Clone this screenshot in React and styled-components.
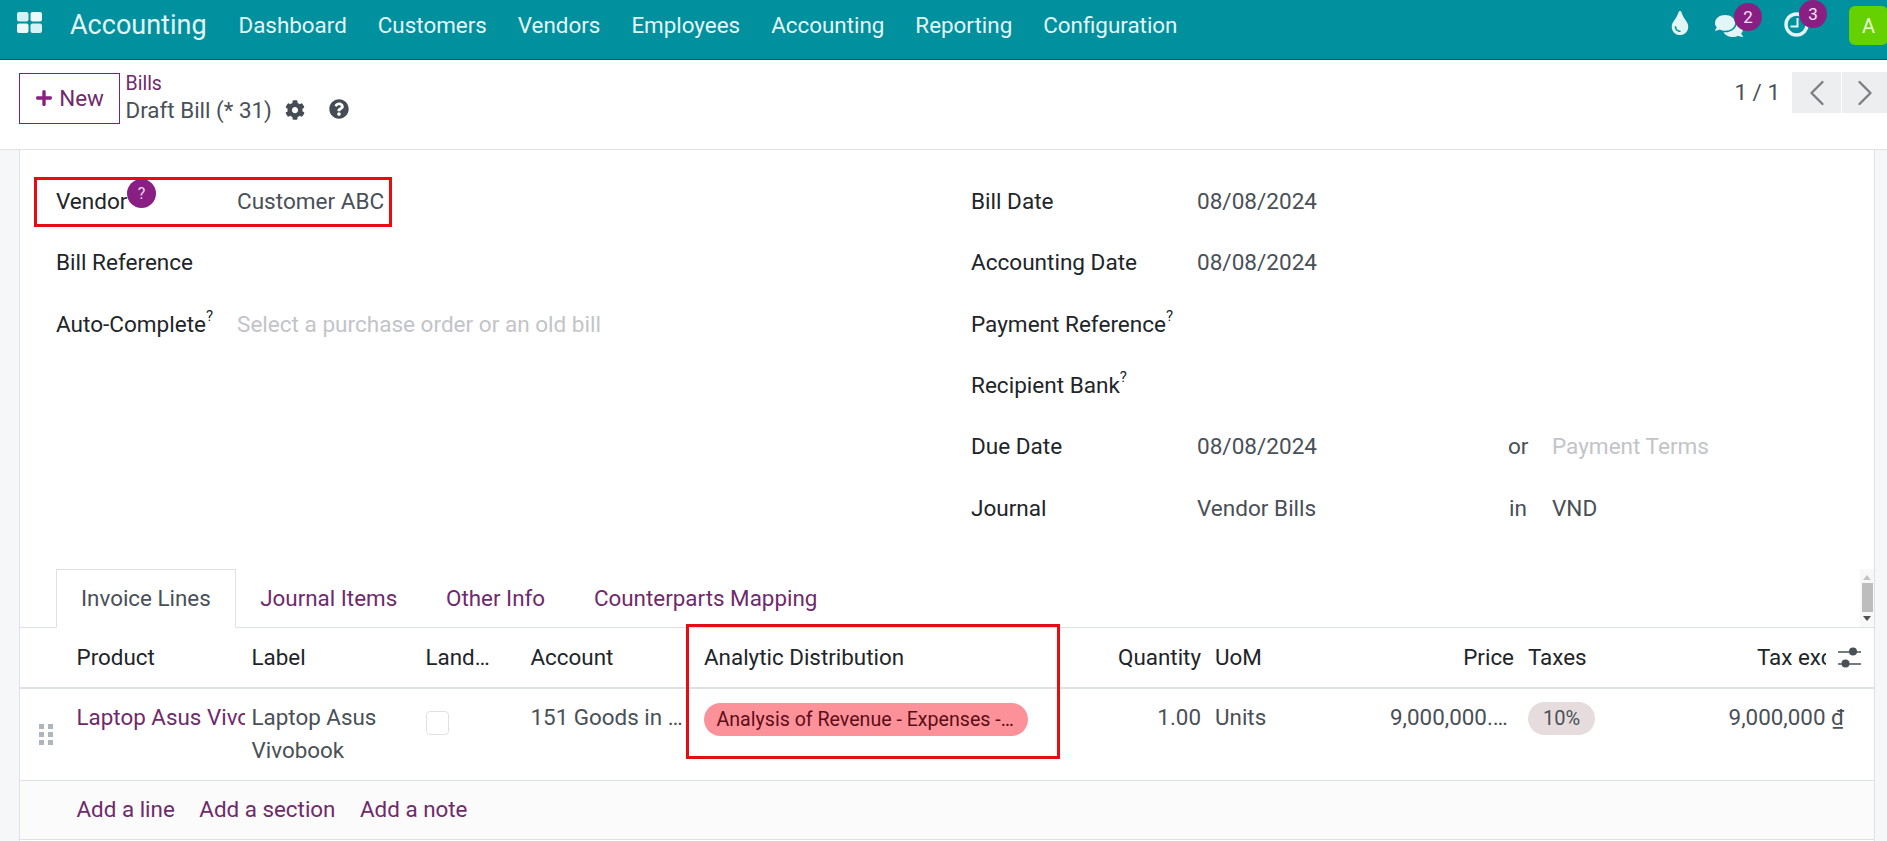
import React from "react";
import styled, { createGlobalStyle } from "styled-components";
import { FaTint, FaComments, FaCog, FaQuestionCircle, FaPlus } from "react-icons/fa";
import { ChevronLeft, ChevronRight } from "lucide-react";

const Global = createGlobalStyle`
  html, body { margin: 0; padding: 0; height: 100%; }
  body { font-family: Roboto, "Liberation Sans", sans-serif; font-size: 22.4px; color: #212529; background: #fff; overflow: hidden; }
  * { box-sizing: border-box; }
`;

const Page = styled.div`
  display: flex; flex-direction: column; height: 841px; overflow: hidden;
`;
const TopBar = styled.header`
  display: flex; align-items: center; height: 60px; flex: none; background: #00909e;
  border-bottom: 1px solid #0a6169; color: #e2f6f7; position: relative;
`;
const AppsButton = styled.div`
  width: 70px; padding-left: 17px; display: flex; align-items: center; margin-top: -13px;
`;
const Brand = styled.div`
  font-size: 27px; width: 153px; margin-top: -10px; flex: none;
`;
const NavItem = styled.div`
  padding: 0 15.5px; margin-top: -9px; font-size: 22.4px; flex: none; white-space: nowrap;
`;
const Systray = styled.div`
  margin-left: auto; position: relative; width: 207px; height: 59px; flex: none;
`;
const TrayIcon = styled.div`
  position: absolute; left: ${p => p.$x}px; top: ${p => p.$y}px; display: flex; color: #e2f6f7;
`;
const Counter = styled.span`
  position: absolute; left: ${p => p.$x}px; top: ${p => p.$y}px; width: 28px; height: 28px; border-radius: 50%;
  background: #8a1f83; color: #f3e4f2; font-size: 17px; display: flex; align-items: center; justify-content: center;
`;
const Avatar = styled.div`
  position: absolute; left: 169px; top: 6px; width: 39px; height: 39px; border-radius: 6px;
  background: #66d100; color: #e9fbd7; font-size: 20px; display: flex; align-items: center; justify-content: center;
`;

const Toolbar = styled.div`
  display: flex; height: 90px; flex: none; background: #fff; border-bottom: 1px solid #dee2e6; position: relative;
`;
const NewButton = styled.div`
  margin: 13px 0 0 19px; width: 101px; height: 51px; padding-bottom: 2px; border: 1px solid #71296b; color: #6f2a6c;
  display: flex; align-items: center; justify-content: center; gap: 6px; font-size: 22.4px; flex: none;
`;
const Crumbs = styled.div`
  margin: 11px 0 0 5.5px; display: flex; flex-direction: column;
`;
const CrumbLink = styled.div`
  color: #6f2a6c; font-size: 19.5px; line-height: 26px;
`;
const CrumbRow = styled.div`
  display: flex; align-items: center; height: 30px; margin-top: -2px; font-size: 22.4px; color: #495057;
`;
const CrumbIcon = styled.span`
  display: flex; color: #454c54; margin-left: ${p => p.$gap}px; margin-top: ${p => p.$lift}px;
`;
const Pager = styled.div`
  margin-left: auto; display: flex; align-items: flex-start; padding-top: 12px;
`;
const PagerText = styled.div`
  color: #495057; font-size: 22.4px; line-height: 41px; margin-right: 12px;
`;
const PagerButton = styled.div`
  width: ${p => p.$w}px; height: 41px; background: #eceef0; color: #7c7f82; display: flex; align-items: center;
  justify-content: center; margin-left: ${p => p.$gap}px;
`;

const Body = styled.div`
  flex: 1; background: #f6f7f9; padding: 0 12px 0 19px; min-height: 0;
`;
const Sheet = styled.div`
  position: relative; background: #fff; border-left: 1px solid #dee2e6; border-right: 1px solid #dee2e6; height: 100%;
`;
const FormGrid = styled.div`
  display: grid; grid-template-columns: 915px 1fr; padding: 20.6px 0 0 36px; height: 419px; font-size: 22.55px;
`;
const FormCol = styled.div`
  display: grid; grid-auto-rows: 61.4px;
`;
const FieldRow = styled.div`
  display: grid; grid-template-columns: ${p => p.$label}px 1fr; align-items: center; white-space: nowrap;
`;
const FieldLabel = styled.div`
  color: #212529;
  sup { font-size: 15px; line-height: 0; position: relative; top: -2px; vertical-align: super; }
`;
const FieldValue = styled.div`
  color: #495057;
`;
const Placeholder = styled.div`
  color: #c2c4c8;
`;
const Compound = styled.div`
  display: grid; grid-template-columns: 311px 20px 1fr; align-items: center;
`;
const Connector = styled.div`
  text-align: center; color: #495057;
`;
const TrailValue = styled.div`
  padding-left: 24px; color: ${p => (p.$muted ? "#c2c4c8" : "#495057")};
`;
const HelpBubble = styled.span`
  position: absolute; left: 107px; top: 29px; width: 29px; height: 29px; border-radius: 50%;
  background: #8a1f83; color: #ecd8ea; font-size: 16px; display: flex; align-items: center; justify-content: center;
`;
const Annotation = styled.div`
  position: absolute; left: ${p => p.$x}px; top: ${p => p.$y}px; width: ${p => p.$w}px; height: ${p => p.$h}px;
  border: 3px solid #e70b14; pointer-events: none;
`;
const ColumnToggle = styled.div`
  position: absolute; left: 1817.5px; top: 497px; display: flex;
`;

const TabStrip = styled.div`
  position: relative; display: flex; height: 59px; padding-left: 36px; border-bottom: 1px solid #dee2e6;
`;
const Tab = styled.div`
  padding: 0 ${p => (p.$active ? 24 : 23.4)}px 2px; height: ${p => (p.$active ? "59px" : "58px")}; display: flex; align-items: center; font-size: 22.4px;
  color: ${p => (p.$active ? "#495057" : "#6f2a6c")}; background: #fff;
  border: 1px solid ${p => (p.$active ? "#dee2e6" : "transparent")}; border-bottom: ${p => (p.$active ? "1px solid #fff" : "0")};
`;
const ScrollBar = styled.div`
  position: absolute; right: 0; top: 0; width: 14px; height: 58px; background: #f8f8f8;
  display: flex; flex-direction: column; align-items: center;
`;
const ScrollThumb = styled.div`
  width: 11px; height: 29px; background: #bdbdbd; margin: 3px 0;
`;
const ArrowUp = styled.div`
  margin-top: 6px; width: 0; height: 0; border-left: 4px solid transparent; border-right: 4px solid transparent;
  border-bottom: 5px solid #c4c4c4;
`;
const ArrowDown = styled.div`
  margin-top: 1px; width: 0; height: 0; border-left: 4px solid transparent; border-right: 4px solid transparent;
  border-top: 5px solid #505050;
`;

const Lines = styled.table`
  table-layout: fixed; width: 100%; border-collapse: collapse; font-size: 22.4px;
`;
const Head = styled.th`
  height: 60px; font-weight: 400; color: #212529; padding: 0 ${p => p.$pr ?? 7}px 2px 7px; overflow: hidden; white-space: nowrap;
  text-overflow: ellipsis; text-align: ${p => p.$align || "left"}; border-bottom: 2px solid #dee2e6;
`;
const Cell = styled.td`
  vertical-align: top; padding: 12px ${p => p.$pr ?? 7}px 0 7px; line-height: 32.5px; height: 92px; color: #495057; overflow: hidden;
  white-space: ${p => (p.$wrap ? "normal" : "nowrap")}; text-align: ${p => p.$align || "left"};
  text-overflow: ${p => (p.$clip ? "clip" : "ellipsis")}; border-bottom: 1px solid #dee2e6;
`;
const HandleCell = styled.td`
  vertical-align: top; padding: 35px 0 0 19px; border-bottom: 1px solid #dee2e6;
`;
const ProductLink = styled.span`
  color: #6f2a6c;
`;
const TaxHeadText = styled.div`
  width: 69px; margin: 0 18px 0 auto; overflow: hidden; white-space: nowrap;
`;
const Check = styled.div`
  width: 23px; height: 24px; margin-top: 10px; border: 1px solid #dee2e6; border-radius: 4px; background: #fff;
`;
const Pill = styled.div`
  width: 324px; height: 33px; margin-top: 2px; line-height: 33px; border-radius: 17px; padding: 0 12.5px; font-size: 19.6px;
  background: #fd9199; color: #5c0d16; overflow: hidden; white-space: nowrap; text-overflow: ellipsis;
`;
const TaxBadge = styled.div`
  width: 67px; height: 33px; margin-top: 1px; line-height: 33px; border-radius: 17px; background: #e6dcde; color: #495057; font-size: 20px; text-align: center;
`;
const AddRow = styled.td`
  height: 59px; background: #fbfbfb; border-bottom: 1px solid #dee2e6; padding: 0 0 2px 56.5px;
`;
const AddLinks = styled.div`
  display: flex; gap: 24.5px; color: #6f2a6c; font-size: 22.4px;
`;

const nav = ["Dashboard", "Customers", "Vendors", "Employees", "Accounting", "Reporting", "Configuration"];
const widths = [49.5, 175, 174, 105, 173.5, 363, 148, 175, 138, 199, 131, 23];

const AppsIcon = () => (
  <svg width="26" height="22" viewBox="0 0 26 22">
    <rect x="0" y="0" width="11.5" height="9.5" rx="2" fill="#d5f3f4" />
    <rect x="13.5" y="0" width="11.5" height="9.5" rx="2" fill="#eefafa" />
    <rect x="0" y="11.5" width="11.5" height="9.5" rx="2" fill="#eefafa" />
    <rect x="13.5" y="11.5" width="11.5" height="9.5" rx="2" fill="#d5f3f4" />
  </svg>
);
const ClockIcon = () => (
  <svg width="25" height="25" viewBox="0 0 25 25">
    <circle cx="12.5" cy="12.5" r="10.5" fill="none" stroke="#e2f6f7" strokeWidth="3.4" />
    <path d="M13.5 6v8.5H6.5" fill="none" stroke="#e2f6f7" strokeWidth="2" />
  </svg>
);
const HandleIcon = () => (
  <svg width="14" height="21" viewBox="0 0 14 21" style={{ display: "block" }}>
    {[0, 8, 16].map(y => [0, 9].map(x => <rect key={`${x}-${y}`} x={x} y={y} width="5" height="5" fill="#adb5bd" />))}
  </svg>
);
const SlidersIcon = () => (
  <svg width="23" height="21" viewBox="0 0 23 21" style={{ display: "block" }}>
    <path d="M0 5h23M0 17h23" stroke="#495057" strokeWidth="1.6" />
    <circle cx="15" cy="4.5" r="4" fill="#495057" />
    <circle cx="7.5" cy="16.5" r="4" fill="#495057" />
  </svg>
);

export default function App() {
  return (
    <Page>
      <Global />
      <TopBar>
        <AppsButton><AppsIcon /></AppsButton>
        <Brand>Accounting</Brand>
        {nav.map(n => <NavItem key={n}>{n}</NavItem>)}
        <Systray>
          <TrayIcon $x={-12} $y={11}><FaTint size={24} /></TrayIcon>
          <TrayIcon $x={35} $y={12}><FaComments size={28} /></TrayIcon>
          <Counter $x={54} $y={3}>2</Counter>
          <TrayIcon $x={104} $y={12}><ClockIcon /></TrayIcon>
          <Counter $x={119} $y={0}>3</Counter>
          <Avatar>A</Avatar>
        </Systray>
      </TopBar>
      <Toolbar>
        <NewButton><FaPlus size={18} color="#8a1f83" />New</NewButton>
        <Crumbs>
          <CrumbLink>Bills</CrumbLink>
          <CrumbRow>
            Draft Bill (* 31)
            <CrumbIcon $gap={13} $lift={0}><FaCog size={20} /></CrumbIcon>
            <CrumbIcon $gap={24} $lift={-3}><FaQuestionCircle size={20} /></CrumbIcon>
          </CrumbRow>
        </Crumbs>
        <Pager>
          <PagerText>1 / 1</PagerText>
          <PagerButton $w={49} $gap={0}><ChevronLeft size={44} strokeWidth={1.3} /></PagerButton>
          <PagerButton $w={45} $gap={1}><ChevronRight size={44} strokeWidth={1.3} /></PagerButton>
        </Pager>
      </Toolbar>
      <Body>
        <Sheet>
          <FormGrid>
            <FormCol>
              <FieldRow $label={181}><FieldLabel>Vendor</FieldLabel><FieldValue>Customer ABC</FieldValue></FieldRow>
              <FieldRow $label={181}><FieldLabel>Bill Reference</FieldLabel><FieldValue /></FieldRow>
              <FieldRow $label={181}><FieldLabel>Auto-Complete<sup>?</sup></FieldLabel><Placeholder>Select a purchase order or an old bill</Placeholder></FieldRow>
            </FormCol>
            <FormCol>
              <FieldRow $label={226}><FieldLabel>Bill Date</FieldLabel><FieldValue>08/08/2024</FieldValue></FieldRow>
              <FieldRow $label={226}><FieldLabel>Accounting Date</FieldLabel><FieldValue>08/08/2024</FieldValue></FieldRow>
              <FieldRow $label={226}><FieldLabel>Payment Reference<sup>?</sup></FieldLabel><FieldValue /></FieldRow>
              <FieldRow $label={226}><FieldLabel>Recipient Bank<sup>?</sup></FieldLabel><FieldValue /></FieldRow>
              <FieldRow $label={226}>
                <FieldLabel>Due Date</FieldLabel>
                <Compound><FieldValue>08/08/2024</FieldValue><Connector>or</Connector><TrailValue $muted>Payment Terms</TrailValue></Compound>
              </FieldRow>
              <FieldRow $label={226}>
                <FieldLabel>Journal</FieldLabel>
                <Compound><FieldValue>Vendor Bills</FieldValue><Connector>in</Connector><TrailValue>VND</TrailValue></Compound>
              </FieldRow>
            </FormCol>
          </FormGrid>
          <TabStrip>
            <Tab $active>Invoice Lines</Tab>
            <Tab>Journal Items</Tab>
            <Tab>Other Info</Tab>
            <Tab>Counterparts Mapping</Tab>
            <ScrollBar><ArrowUp /><ScrollThumb /><ArrowDown /></ScrollBar>
          </TabStrip>
          <Lines>
            <colgroup>{widths.map((w, i) => <col key={i} style={{ width: w }} />)}</colgroup>
            <thead>
              <tr>
                <Head />
                <Head>Product</Head>
                <Head>Label</Head>
                <Head $pr={30}>Landed Costs</Head>
                <Head>Account</Head>
                <Head>Analytic Distribution</Head>
                <Head $align="right">Quantity</Head>
                <Head>UoM</Head>
                <Head $align="right">Price</Head>
                <Head>Taxes</Head>
                <Head><TaxHeadText>Tax excl.</TaxHeadText></Head>
                <Head />
              </tr>
            </thead>
            <tbody>
              <tr>
                <HandleCell><HandleIcon /></HandleCell>
                <Cell $clip $pr={0}><ProductLink>Laptop Asus Vivobook</ProductLink></Cell>
                <Cell $wrap>Laptop Asus Vivobook</Cell>
                <Cell><Check /></Cell>
                <Cell $pr={12}>151 Goods in transit</Cell>
                <Cell><Pill>Analysis of Revenue - Expenses - Laptop</Pill></Cell>
                <Cell $align="right">1.00</Cell>
                <Cell>Units</Cell>
                <Cell $align="right">9,000,000.00</Cell>
                <Cell><TaxBadge>10%</TaxBadge></Cell>
                <Cell $align="right">9,000,000 ₫</Cell>
                <Cell />
              </tr>
              <tr>
                <AddRow colSpan={12}>
                  <AddLinks><span>Add a line</span><span>Add a section</span><span>Add a note</span></AddLinks>
                </AddRow>
              </tr>
            </tbody>
          </Lines>
          <HelpBubble>?</HelpBubble>
          <ColumnToggle><SlidersIcon /></ColumnToggle>
          <Annotation $x={14} $y={27} $w={358} $h={50} />
          <Annotation $x={666} $y={474} $w={374} $h={135} />
        </Sheet>
      </Body>
    </Page>
  );
}
